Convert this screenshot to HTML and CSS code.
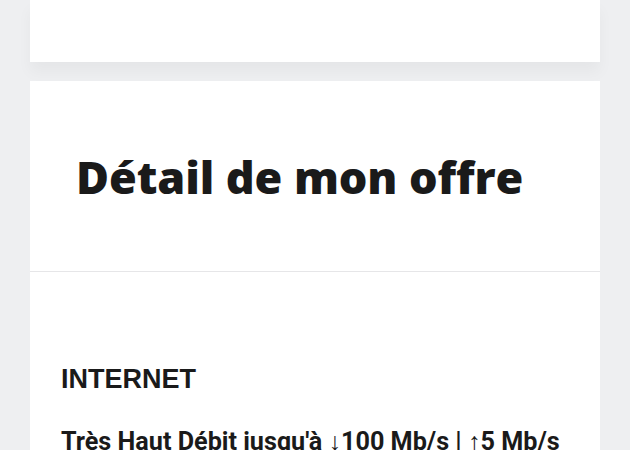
FILE: index.html
```html
<!DOCTYPE html>
<html lang="fr">

<head>
    <meta charset="UTF-8">
    <meta name="viewport" content="width=device-width, initial-scale=1.0">
    <title>Détail de mon offre</title>
    <link rel="stylesheet" href="styles.css">
</head>

<body>
    <div class="page">
        <div class="card card-top"></div>

        <div class="card card-offer">
            <div class="offer-head">
                <h1>Détail de mon offre</h1>
            </div>
            <div class="offer-body">
                <h2>INTERNET</h2>
                <p class="speed">Très Haut Débit jusqu'à ↓100 Mb/s | ↑5 Mb/s</p>
            </div>
        </div>
    </div>
</body>

</html>
```

FILE: styles.css
```css
body {
    margin: 0;
    background-color: #eeeff1;
    font-family: 'Liberation Sans', Arial, sans-serif;
    color: #1a1a1a;
    overflow: hidden;
}

.page {
    padding: 0 30px;
}

.card {
    background: white;
}

.card-top {
    height: 62px;
    margin-bottom: 19px;
    box-shadow: 0 10px 14px rgba(0, 0, 0, 0.04);
}

.offer-head {
    height: 190px;
    padding: 0 46px;
    display: flex;
    align-items: center;
    border-bottom: 1px solid #e6e6e8;
}

.offer-head h1 {
    margin: 0;
    font-family: 'Open Sans', sans-serif;
    font-weight: 800;
    font-size: 45px;
    letter-spacing: -0.1px;
    color: #1a1a1a;
}

.offer-body {
    padding: 92px 31px 0;
}

.offer-body h2 {
    margin: 0 0 32px;
    font-size: 27px;
    font-weight: bold;
}

.speed {
    margin: 0;
    font-family: Roboto, sans-serif;
    font-size: 25.2px;
    font-weight: bold;
    white-space: nowrap;
}
```
